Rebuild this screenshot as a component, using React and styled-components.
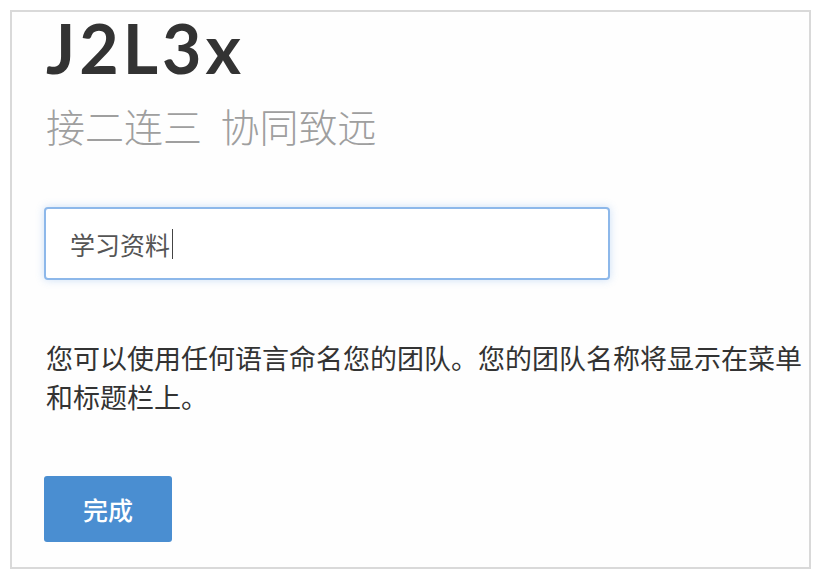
import React from "react";
import styled, { createGlobalStyle } from "styled-components";

const GlobalStyle = createGlobalStyle`
  html, body {
    margin: 0;
    padding: 0;
    background: #fff;
  }
  body {
    font-family: "Noto Sans CJK SC", "Noto Sans", sans-serif;
  }
`;

const Frame = styled.section`
  box-sizing: border-box;
  margin: 10px 0 0 10px;
  width: 801px;
  height: 559px;
  border: 2px solid #d9d9d9;
  background: #fefefe;
  padding: 0 0 0 34px;
  display: flex;
  flex-direction: column;
  align-items: flex-start;
`;

const Title = styled.h1`
  margin: 0;
  font-family: "Lato", "Liberation Sans", sans-serif;
  font-weight: 700;
  font-size: 68px;
  line-height: 72px;
  letter-spacing: 4px;
  color: #333;
`;

const Tagline = styled.h2`
  margin: 16px 0 0 0;
  font-family: "Noto Sans CJK SC", sans-serif;
  font-weight: 200;
  font-size: 39px;
  line-height: 50px;
  word-spacing: 10px;
  color: #9f9f9f;
`;

const NameInput = styled.div`
  box-sizing: border-box;
  margin: 57px 0 0 -2px;
  width: 566px;
  height: 73px;
  border: 2px solid #8db8ea;
  border-radius: 4px;
  box-shadow: 0 0 8px rgba(74, 144, 226, 0.28);
  background: #fff;
  padding: 0 24px;
  display: flex;
  align-items: center;
  font-size: 25px;
  color: #555;
`;

const Caret = styled.span`
  display: inline-block;
  width: 1px;
  height: 30px;
  margin-left: 2px;
  background: #444;
`;

const Hint = styled.p`
  margin: 58px 0 0 0;
  width: 760px;
  font-size: 27px;
  line-height: 39px;
  color: #333;
`;

const DoneButton = styled.button`
  margin: 60px 0 0 -2px;
  width: 128px;
  height: 66px;
  border: none;
  border-radius: 3px;
  background: #4a8ed1;
  color: #fff;
  font-family: "Noto Sans CJK SC", sans-serif;
  font-weight: 500;
  font-size: 25px;
  cursor: pointer;
`;

export default function App() {
  return (
    <>
      <GlobalStyle />
      <Frame>
        <Title>J2L3x</Title>
        <Tagline>接二连三 协同致远</Tagline>
        <NameInput>
          学习资料
          <Caret />
        </NameInput>
        <Hint>
          您可以使用任何语言命名您的团队。您的团队名称将显示在菜单和标题栏上。
        </Hint>
        <DoneButton>完成</DoneButton>
      </Frame>
    </>
  );
}
